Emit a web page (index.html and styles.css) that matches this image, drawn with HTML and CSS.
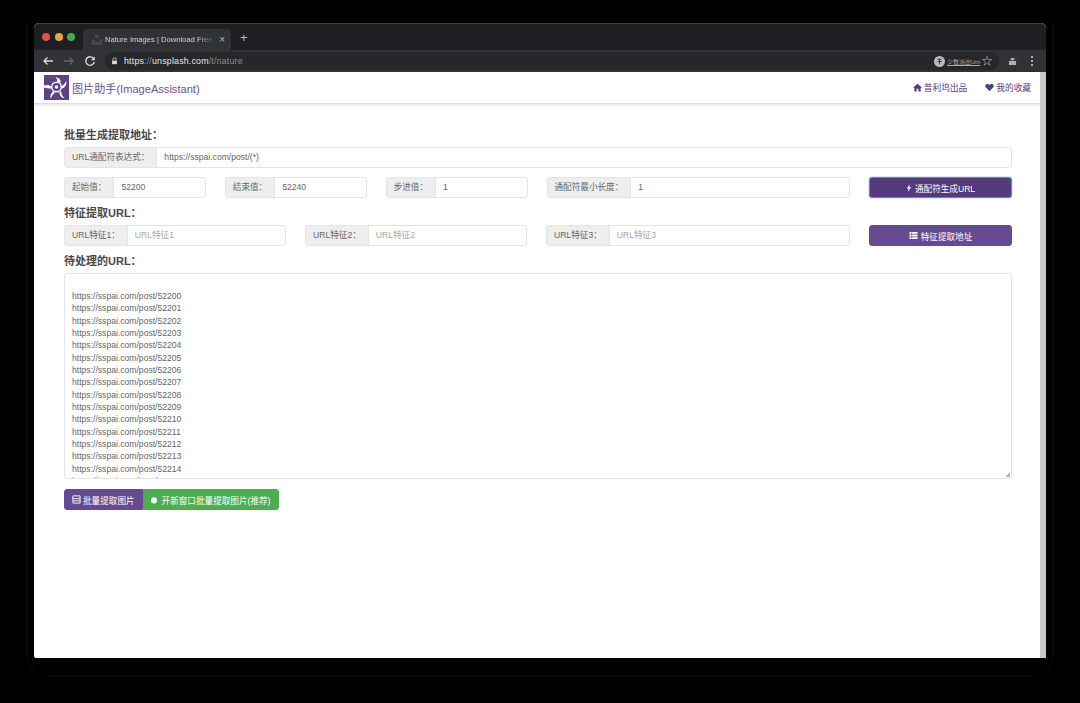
FILE: index.html
```html
<!DOCTYPE html>
<html lang="zh-CN">
<head>
<meta charset="utf-8">
<title>图片助手(ImageAssistant)</title>
<link rel="stylesheet" href="styles.css">
</head>
<body>
<div class="window">
  <div class="tabbar">
    <div class="lights"><span class="light red"></span><span class="light yellow"></span><span class="light green"></span></div>
    <div class="tab">
      <svg class="favicon" viewBox="0 0 12 12"><path d="M4 1h4v3H4zM1 5.500h3V8h4V5.500h3V11H1z" fill="#45484c"/></svg>
      <span class="tab-title">Nature Images | Download Free</span>
      <span class="tab-close">×</span>
    </div>
    <span class="new-tab">+</span>
  </div>
  <div class="toolbar">
    <svg class="nav-icon" viewBox="0 0 12 12"><path d="M11 6H2M5.500 2.500 2 6l3.500 3.500" fill="none" stroke="#d6d8da" stroke-width="1.300"/></svg>
    <svg class="nav-icon" viewBox="0 0 12 12"><path d="M1 6h9M6.500 2.500 10 6 6.500 9.500" fill="none" stroke="#65686b" stroke-width="1.300"/></svg>
    <svg class="nav-icon" viewBox="0 0 12 12"><path d="M10 4.200A4.300 4.300 0 1 0 10.300 7" fill="none" stroke="#d6d8da" stroke-width="1.400"/><path d="M10.800 1.500v3.800H7z" fill="#d6d8da"/></svg>
    <div class="omnibox">
      <svg class="lock" viewBox="0 0 8 10"><path d="M2 4.500V3a2 2 0 0 1 4 0v1.500" fill="none" stroke="#d6d8da"/><rect x="1" y="4.500" width="6" height="4.500" fill="#d6d8da"/></svg>
      <span class="url">https<span class="dim">://</span>unsplash.com<span class="dim">/t/nature</span></span>
      <span class="account">
        <svg class="avatar" viewBox="0 0 10 10"><circle cx="5" cy="5" r="5" fill="#b9bcbe"/><path d="M3 3h4M5 3v4.500M3 5h4" stroke="#3a3c3f" stroke-width="1"/></svg>
        <span class="account-name">少数派出Uni</span>
      </span>
      <span class="star">☆</span>
    </div>
    <svg class="ext-icon" viewBox="0 0 10 10"><path d="M3 1h4v2.500H3zM1 4.500h8V9H1z" fill="#aeb1b3"/></svg>
    <svg class="menu-icon" viewBox="0 0 4 12"><circle cx="2" cy="2" r="1" fill="#d6d8da"/><circle cx="2" cy="6" r="1" fill="#d6d8da"/><circle cx="2" cy="10" r="1" fill="#d6d8da"/></svg>
  </div>
  <div class="page">
    <div class="viewport">
      <nav class="navbar">
        <a class="brand">
          <svg class="logo" viewBox="0 0 26 26">
            <rect width="26" height="26" fill="#5d4287"/>
            <path d="M0 11c3-1 5-1 7 1l1 2c-3 0-6 0-8-1zM12 2c4 1 6 3 5 6l-3-1c0-2-1-4-2-5zM23 6c1 4-1 7-4 8l-1-2c2-1 4-3 5-6zM21 24c-3 0-5-3-5-6l2-1c0 3 1 5 3 7zM7 25c-1-3 0-6 3-8l1 2c-2 1-3 3-4 6z" fill="#fff"/>
            <circle cx="13" cy="12.500" r="5" fill="none" stroke="#fff" stroke-width="1.500"/>
            <circle cx="13" cy="12.500" r="1.800" fill="#fff"/>
          </svg>
          <span>图片助手(ImageAssistant)</span>
        </a>
        <div class="nav-links">
          <a class="nav-link"><svg class="nav-glyph" viewBox="0 0 10 10"><path d="M5 .8 10 5.300H8.500V9.500H6V6.500H4V9.500H1.500V5.300H0z" fill="#553a7e"/></svg>普利坞出品</a>
          <a class="nav-link"><svg class="nav-glyph" viewBox="0 0 10 10"><path d="M5 9.300 .8 4.800C-.6 2.800 1 1 2.600 1 3.700 1 4.500 1.600 5 2.400 5.500 1.600 6.300 1 7.400 1 9 1 10.600 2.800 9.200 4.800z" fill="#553a7e"/></svg>我的收藏</a>
        </div>
      </nav>
      <main class="content">
        <h4 class="section-title">批量生成提取地址：</h4>
        <div class="group">
          <span class="addon">URL通配符表达式：</span>
          <span class="field">https://sspai.com/post/(*)</span>
        </div>
        <div class="row row-gen">
          <div class="group"><span class="addon">起始值：</span><span class="field">52200</span></div>
          <div class="group"><span class="addon">结束值：</span><span class="field">52240</span></div>
          <div class="group"><span class="addon">步进值：</span><span class="field">1</span></div>
          <div class="group"><span class="addon">通配符最小长度：</span><span class="field">1</span></div>
          <button class="btn btn-focus"><svg class="btn-icon" viewBox="0 0 8 10"><path d="M5 0 1 5.500h2.500L2.500 10 7 4H4.300z" fill="#fff"/></svg>通配符生成URL</button>
        </div>
        <h4 class="section-title">特征提取URL：</h4>
        <div class="row row-feat">
          <div class="group"><span class="addon">URL特征1：</span><span class="field placeholder">URL特征1</span></div>
          <div class="group"><span class="addon">URL特征2：</span><span class="field placeholder">URL特征2</span></div>
          <div class="group"><span class="addon">URL特征3：</span><span class="field placeholder">URL特征3</span></div>
          <button class="btn"><svg class="btn-icon list" viewBox="0 0 10 10"><path d="M.5 1h9v2H.5zM.5 4h9v2H.5zM.5 7h9v2H.5z" fill="#fff"/><path d="M3 1v8" stroke="#674b91" stroke-width=".6"/></svg>特征提取地址</button>
        </div>
        <h4 class="section-title">待处理的URL：</h4>
        <div class="textarea">
          <div class="url-lines">
            <div>https://sspai.com/post/52200</div>
            <div>https://sspai.com/post/52201</div>
            <div>https://sspai.com/post/52202</div>
            <div>https://sspai.com/post/52203</div>
            <div>https://sspai.com/post/52204</div>
            <div>https://sspai.com/post/52205</div>
            <div>https://sspai.com/post/52206</div>
            <div>https://sspai.com/post/52207</div>
            <div>https://sspai.com/post/52208</div>
            <div>https://sspai.com/post/52209</div>
            <div>https://sspai.com/post/52210</div>
            <div>https://sspai.com/post/52211</div>
            <div>https://sspai.com/post/52212</div>
            <div>https://sspai.com/post/52213</div>
            <div>https://sspai.com/post/52214</div>
            <div>https://sspai.com/post/52215</div>
          </div>
          <svg class="grip" viewBox="0 0 6 6"><path d="M6 0v6H0z" fill="#b5b5b5"/></svg>
        </div>
        <div class="btn-group">
          <button class="btn btn-seg"><svg class="btn-icon list" viewBox="0 0 10 10"><path d="M1 1h8v8H1zM1 4h8M1 6.500h8" fill="none" stroke="#fff"/></svg>批量提取图片</button>
          <button class="btn btn-seg btn-green"><svg class="btn-icon" viewBox="0 0 10 10"><circle cx="5" cy="5.500" r="3.800" fill="#fff"/></svg>开新窗口批量提取图片(推荐)</button>
        </div>
      </main>
    </div>
    <div class="scrollbar"></div>
  </div>
</div>
</body>
</html>
```
FILE: styles.css
```css
* { box-sizing: border-box; }
html, body { margin: 0; height: 100%; }
body {
  background: #000;
  padding: 23px 34px 0;
  overflow: hidden;
  font-family: "Liberation Sans", "Noto Sans CJK SC", sans-serif;
  font-size: 8.6px;
  color: #5f5f5f;
}
.window {
  position: relative;
  display: flex;
  flex-direction: column;
  height: 635px;
  border-radius: 5px 5px 2px 2px;
  background: #fff;
}
.window::after {
  content: "";
  position: absolute;
  inset: 0 -8px -19px -8px;
  border: 1px solid #0b0b0b;
  border-top: 0;
  border-radius: 0 0 24px 24px;
  pointer-events: none;
}
.tabbar {
  display: flex;
  align-items: flex-end;
  height: 27px;
  padding-left: 8px;
  background: #1e1f22;
  border-top: 1px solid #3a3c3e;
  border-radius: 5px 5px 0 0;
}
.lights { display: flex; gap: 4.5px; align-self: center; margin-right: 8px; }
.light { width: 8px; height: 8px; border-radius: 50%; }
.red { background: #e0524a; }
.yellow { background: #e3a93a; }
.green { background: #3fae4f; }
.tab {
  display: flex;
  align-items: center;
  width: 148px;
  height: 21px;
  padding: 0 6px 0 8px;
  background: #303235;
  border-radius: 5px 5px 0 0;
}
.favicon { width: 12px; height: 12px; margin-right: 2px; flex: none; }
.tab-title {
  flex: 1;
  overflow: hidden;
  white-space: nowrap;
  font-size: 7.600px;
  color: #d3d5d7;
  -webkit-mask-image: linear-gradient(to right, #000 85%, transparent);
  mask-image: linear-gradient(to right, #000 85%, transparent);
}
.tab-close { margin-left: 4px; font-size: 10px; line-height: 10px; color: #b4b6b8; }
.new-tab { align-self: center; margin-left: 9px; font-size: 13px; line-height: 13px; color: #b9bbbd; }
.toolbar {
  display: flex;
  align-items: center;
  height: 22px;
  padding: 0 12px 0 8px;
  background: #303235;
}
.nav-icon { width: 12px; height: 12px; margin-right: 9px; flex: none; }
.omnibox {
  display: flex;
  align-items: center;
  flex: 1;
  height: 18px;
  margin: 0 9px 0 0;
  padding: 0 6.500px 0 6px;
  background: #25272a;
  border-radius: 9px;
}
.lock { width: 7px; height: 8px; margin-right: 6px; }
.url { flex: 1; font-size: 8.800px; color: #e6e7e8; letter-spacing: .2px; }
.dim { color: #8d9093; }
.account { display: flex; align-items: center; gap: 2px; margin-right: 1.500px; }
.avatar { width: 11px; height: 11px; }
.account-name { font-size: 6px; color: #a9abad; text-decoration: underline; }
.star { font-size: 11px; line-height: 11px; color: #c6c8ca; }
.ext-icon { width: 9px; height: 9px; margin-right: 13px; }
.menu-icon { width: 4px; height: 12px; }
.page { display: flex; flex: 1; min-height: 0; }
.viewport { flex: 1; min-width: 0; display: flex; flex-direction: column; }
.scrollbar { width: 6px; background: #c7c7c7; }
.navbar {
  display: flex;
  align-items: center;
  justify-content: space-between;
  height: 32px;
  padding: 0 9px 0 10px;
  background: #fff;
  border-bottom: 1px solid #dcdcdc;
  box-shadow: 0 1px 3px rgba(0,0,0,.12);
}
.brand { display: flex; align-items: center; gap: 3px; font-size: 11.100px; color: #6a5290; }
.logo { width: 25px; height: 25px; }
.nav-links { display: flex; gap: 18px; }
.nav-link { display: flex; align-items: center; gap: 2px; font-size: 8.700px; color: #5a3f85; }
.nav-glyph { width: 9px; height: 9px; }
.content { padding: 24px 28px 0 30px; }
.section-title {
  margin: 0 0 5px;
  height: 14px;
  font-size: 11px;
  line-height: 14px;
  font-weight: 700;
  color: #484848;
}
.group {
  display: flex;
  height: 21px;
  min-width: 0;
  border: 1px solid #e4e4e4;
  border-radius: 3px;
  overflow: hidden;
  line-height: 19px;
  background: #fff;
}
.addon {
  flex: none;
  padding: 0 7px;
  background: #eee;
  border-right: 1px solid #e4e4e4;
  white-space: nowrap;
  color: #666;
}
.field { flex: 1; padding: 0 7px; white-space: nowrap; color: #666; }
.placeholder { color: #a8a8a8; }
.row { display: grid; column-gap: 19px; height: 21px; }
.row-gen { grid-template-columns: 142fr 142fr 142fr 304fr 143fr; margin: 9px 0 8px; }
.row-feat { grid-template-columns: 222fr 222fr 304fr 143fr; margin-bottom: 8px; }
.btn {
  display: flex;
  align-items: center;
  justify-content: center;
  gap: 3px;
  height: 21px;
  padding: 0 7px;
  border: 1px solid #674b91;
  border-radius: 3px;
  background: #674b91;
  color: #fff;
  font: inherit;
  white-space: nowrap;
}
.btn-focus {
  background: #553a7e;
  border-color: #4f8fd8;
  box-shadow: 0 0 2px rgba(70,130,220,.6);
}
.btn-icon { width: 6px; height: 8px; }
.btn-icon.list { width: 9px; height: 9px; }
.textarea {
  position: relative;
  height: 206px;
  margin-bottom: 10px;
  border: 1px solid #e4e4e4;
  border-radius: 3px;
  overflow: hidden;
  padding: 16px 7px 0;
  color: #666;
}
.url-lines { line-height: 12.350px; }
.grip { position: absolute; right: 1px; bottom: 1px; width: 5px; height: 5px; }
.btn-group { display: flex; }
.btn-seg { gap: 2px; border-radius: 3px 0 0 3px; }
.btn-seg.btn-green {
  gap: 4px;
  background: #4cae50;
  border-color: #4cae50;
  border-radius: 0 3px 3px 0;
  padding: 0 8px 0 6px;
}
.btn-green .btn-icon { width: 8px; height: 8px; }
```
